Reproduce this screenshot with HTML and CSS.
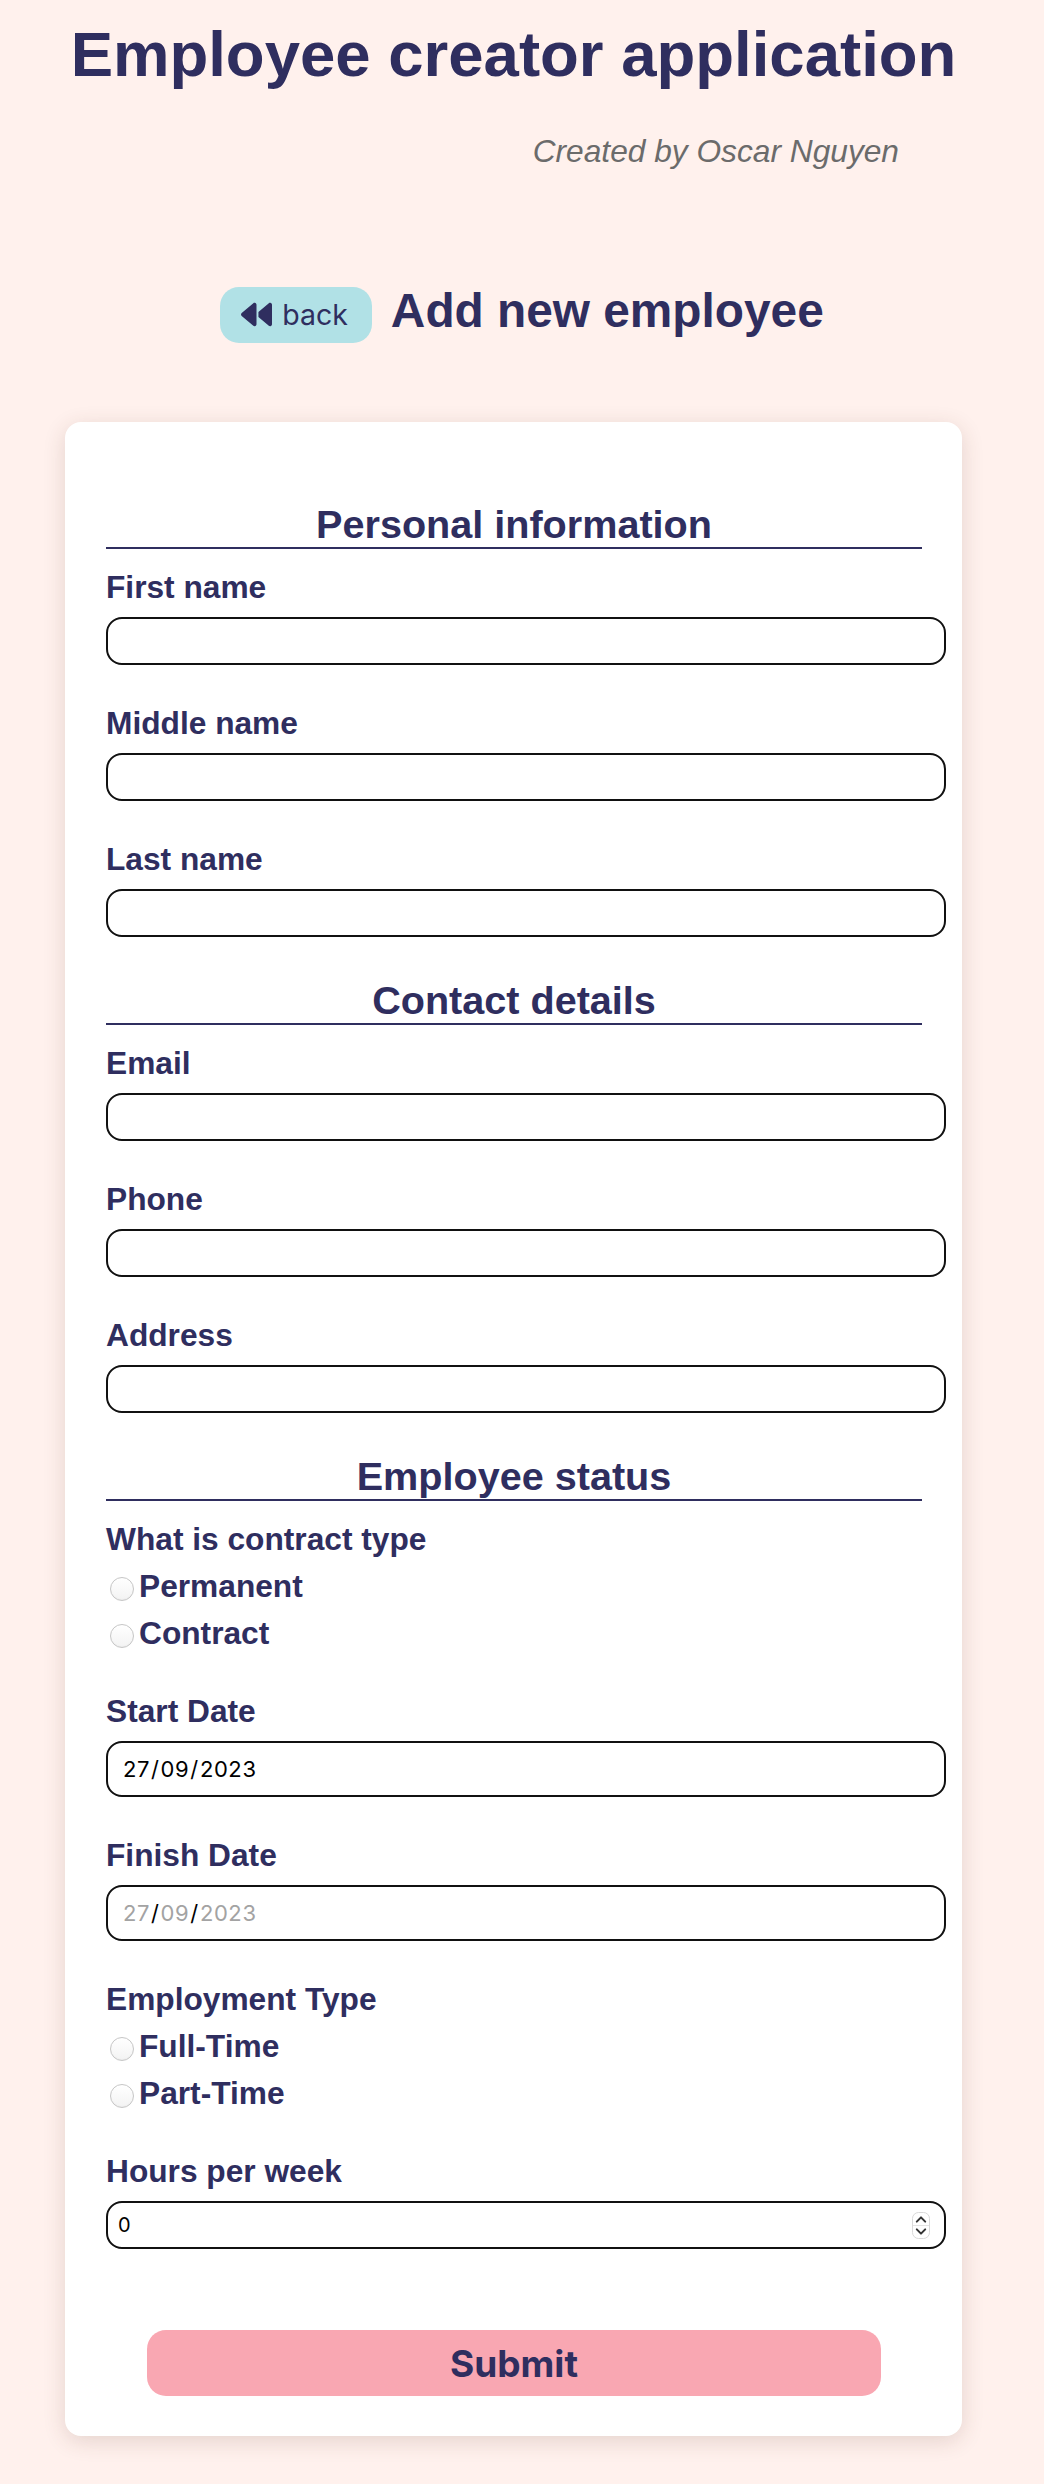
FILE: index.html
```html
<!DOCTYPE html>
<html lang="en">
<head>
<meta charset="utf-8">
<title>Employee creator application</title>
<link rel="stylesheet" href="styles.css">
</head>
<body>
  <header class="app-header">
    <h1 class="app-title">Employee creator application</h1>
    <p class="credit">Created by Oscar Nguyen</p>
  </header>

  <div class="top-row">
    <button class="back-btn" type="button">
      <svg class="back-icon" viewBox="0 0 512 512" width="31" height="31" aria-hidden="true"><path fill="currentColor" d="M459.5 440.6c9.5 7.9 22.8 9.7 34.1 4.4s18.4-16.6 18.4-29V96c0-12.4-7.2-23.7-18.4-29s-24.5-3.6-34.1 4.4L288 214.3V256v41.7L459.5 440.6zM256 352V256 128 96c0-12.4-7.2-23.7-18.4-29s-24.5-3.6-34.1 4.4l-192 160C4.2 237.5 0 246.5 0 256s4.2 18.5 11.5 24.6l192 160c9.5 7.9 22.8 9.7 34.1 4.4s18.4-16.6 18.4-29V352z"/></svg>
      <span>back</span>
    </button>
    <h2 class="page-title">Add new employee</h2>
  </div>

  <main class="main">
    <form class="card">
      <h3 class="section-title">Personal information</h3>
      <div class="field">
        <label class="field-label" for="first">First name</label>
        <input class="text-input" id="first" type="text">
      </div>
      <div class="field">
        <label class="field-label" for="middle">Middle name</label>
        <input class="text-input" id="middle" type="text">
      </div>
      <div class="field">
        <label class="field-label" for="last">Last name</label>
        <input class="text-input" id="last" type="text">
      </div>

      <h3 class="section-title">Contact details</h3>
      <div class="field">
        <label class="field-label" for="email">Email</label>
        <input class="text-input" id="email" type="email">
      </div>
      <div class="field">
        <label class="field-label" for="phone">Phone</label>
        <input class="text-input" id="phone" type="tel">
      </div>
      <div class="field">
        <label class="field-label" for="address">Address</label>
        <input class="text-input" id="address" type="text">
      </div>

      <h3 class="section-title">Employee status</h3>
      <div class="field radio-group">
        <span class="field-label">What is contract type</span>
        <label class="radio-option"><input class="radio" type="radio" name="contract">Permanent</label>
        <label class="radio-option"><input class="radio" type="radio" name="contract">Contract</label>
      </div>
      <div class="field">
        <span class="field-label">Start Date</span>
        <div class="date-field" role="textbox"><span>27</span><span class="sep">/</span><span>09</span><span class="sep">/</span><span>2023</span></div>
      </div>
      <div class="field">
        <span class="field-label">Finish Date</span>
        <div class="date-field empty" role="textbox"><span class="ph">27</span><span class="sep">/</span><span class="ph">09</span><span class="sep">/</span><span class="ph">2023</span></div>
      </div>
      <div class="field radio-group">
        <span class="field-label">Employment Type</span>
        <label class="radio-option"><input class="radio" type="radio" name="etype">Full-Time</label>
        <label class="radio-option"><input class="radio" type="radio" name="etype">Part-Time</label>
      </div>
      <div class="field">
        <label class="field-label" for="hours">Hours per week</label>
        <div class="number-box">
          <input class="number-input" id="hours" type="number" value="0">
          <svg class="spinner" viewBox="0 0 18 27" width="18" height="27" aria-hidden="true">
            <rect x="0.5" y="0.5" width="17" height="26" rx="6" fill="#fff" stroke="#d9d9d9"/>
            <line x1="1" y1="13.5" x2="17" y2="13.5" stroke="#e4e4e4"/>
            <polyline points="4.8,9.6 9,5.4 13.2,9.6" fill="none" stroke="#333" stroke-width="2" stroke-linecap="round" stroke-linejoin="round"/>
            <polyline points="4.8,17.4 9,21.6 13.2,17.4" fill="none" stroke="#333" stroke-width="2" stroke-linecap="round" stroke-linejoin="round"/>
          </svg>
        </div>
      </div>

      <button class="submit-btn" type="submit">Submit</button>
    </form>
  </main>
</body>
</html>
```

FILE: styles.css
```css
html {
  background: #fff1ed;
}

body {
  margin: 0;
  background: #fff1ed;
  color: #2f2e5f;
  font-family: "Liberation Sans", Arial, Helvetica, sans-serif;
}

/* ---------- header ---------- */
.app-header {
  padding-right: 17px;
}

.app-title {
  margin: 18px 0 0;
  font-size: 63.5px;
  line-height: 73px;
  font-weight: bold;
  text-align: center;
}

.credit {
  margin: 42px 128px 0 0;
  font-size: 31.7px;
  line-height: 36px;
  font-style: italic;
  color: #6b6b6b;
  text-align: right;
}

/* ---------- back row ---------- */
.top-row {
  display: flex;
  justify-content: center;
  align-items: center;
  gap: 19px;
  margin-top: 114px;
}

.back-btn {
  display: inline-flex;
  align-items: center;
  gap: 10px;
  height: 56px;
  padding: 0 24px 0 21px;
  border: none;
  border-radius: 19px;
  background: #b1e1e6;
  color: #2f2e5f;
  font-family: Inter, "Open Sans", sans-serif;
  font-size: 28.5px;
  cursor: pointer;
}

.back-icon {
  display: block;
  flex: none;
}

.page-title {
  margin: 0 0 8px;
  font-size: 47.8px;
  line-height: 55px;
  font-weight: bold;
}

/* ---------- card ---------- */
.main {
  padding-right: 17px;
  padding-bottom: 48px;
}

.card {
  box-sizing: border-box;
  width: 897px;
  margin: 76px auto 0;
  padding: 79px 40px 40px 41px;
  background: #ffffff;
  border-radius: 16px;
  box-shadow: 0 5px 22px rgba(90, 50, 40, 0.16);
}

.section-title {
  margin: 0 0 20px;
  font-size: 39.6px;
  line-height: 46px;
  font-weight: bold;
  text-align: center;
  border-bottom: 2px solid #2f2e5f;
}

.field {
  margin-bottom: 40px;
}

.field-label {
  display: block;
  margin-bottom: 12px;
  font-size: 31.7px;
  line-height: 36px;
  font-weight: bold;
}

.text-input {
  display: block;
  box-sizing: content-box;
  width: 100%;
  height: 44px;
  padding: 0 10px;
  margin: 0;
  border: 2px solid #111;
  border-radius: 16px;
  background: #fff;
  color: #000;
  font-family: Inter, "Open Sans", sans-serif;
  font-size: 20px;
  outline: none;
}

/* ---------- radios ---------- */
.radio-group {
  margin-bottom: 42px;
}

.radio-group .field-label {
  margin-bottom: 0;
}

.radio-option {
  display: block;
  margin-top: 11px;
  font-size: 31.7px;
  line-height: 36px;
  font-weight: bold;
}

.radio {
  -webkit-appearance: none;
  appearance: none;
  display: inline-block;
  box-sizing: border-box;
  width: 24px;
  height: 24px;
  margin: 0 5px -4px 4px;
  vertical-align: baseline;
  border: 1px solid #c6c6c6;
  border-radius: 50%;
  background: linear-gradient(#ffffff, #f3f3f3);
  box-shadow: inset 0 -1px 1px rgba(0, 0, 0, 0.03);
}

/* ---------- date fields ---------- */
.date-field {
  display: flex;
  align-items: center;
  box-sizing: content-box;
  width: 100%;
  height: 52px;
  padding: 0 10px;
  border: 2px solid #111;
  border-radius: 16px;
  background: #fff;
  color: #000;
  font-family: Inter, "Open Sans", sans-serif;
  font-size: 22px;
  letter-spacing: 0.6px;
}

.date-field span:first-child {
  margin-left: 5px;
}

.date-field .sep {
  margin: 0 1px;
}

.date-field .ph {
  color: #a3a3a3;
}

/* ---------- number ---------- */
.number-box {
  display: flex;
  align-items: center;
  box-sizing: content-box;
  width: 100%;
  height: 44px;
  padding: 0 10px;
  border: 2px solid #111;
  border-radius: 16px;
  background: #fff;
}

.number-input {
  flex: 1;
  min-width: 0;
  height: 100%;
  padding: 0;
  margin: 0;
  border: none;
  background: transparent;
  color: #000;
  font-family: Inter, "Open Sans", sans-serif;
  font-size: 20px;
  outline: none;
  -moz-appearance: textfield;
}

.number-input::-webkit-inner-spin-button,
.number-input::-webkit-outer-spin-button {
  -webkit-appearance: none;
  margin: 0;
}

.spinner {
  display: block;
  flex: none;
  margin: 0 4px 0 8px;
}

/* ---------- submit ---------- */
.submit-btn {
  display: block;
  width: 90%;
  height: 66px;
  margin: 81px auto 0;
  border: none;
  border-radius: 19px;
  background: #f9a7b2;
  color: #2f2e5f;
  font-family: Inter, "Open Sans", sans-serif;
  font-size: 37px;
  font-weight: bold;
  cursor: pointer;
}
```
